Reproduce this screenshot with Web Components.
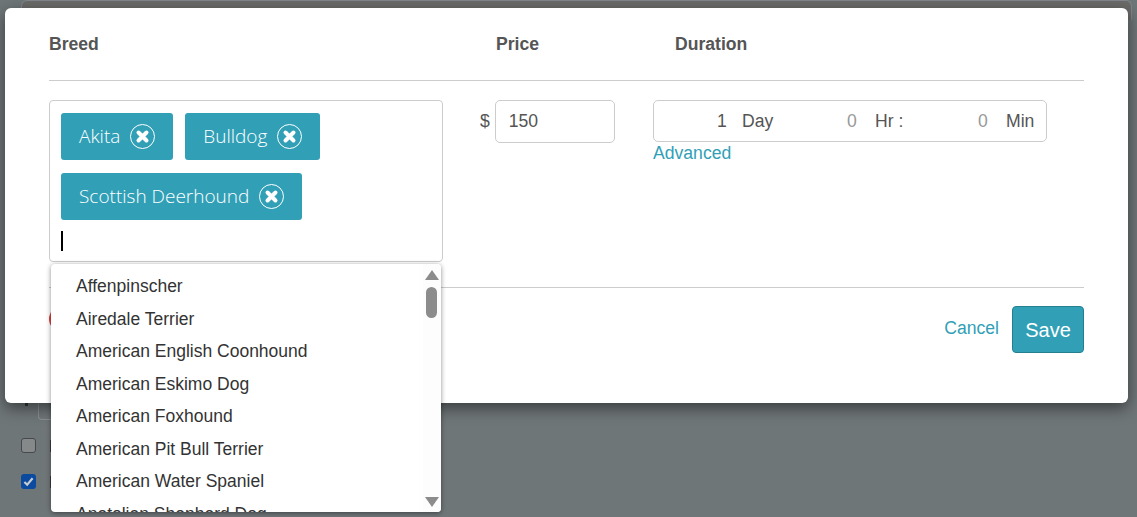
<!DOCTYPE html>
<html>
<head>
<meta charset="utf-8">
<title>Breed pricing</title>
<style>
  html, body { margin: 0; padding: 0; background: #6f7678; }
  body { font-family: "Liberation Sans", Arial, sans-serif; }
</style>
</head>
<body>
<page-backdrop></page-backdrop>
<edit-modal>
  <field-grid>
    <span slot="breed">Breed</span>
    <span slot="price">Price</span>
    <span slot="duration">Duration</span>
  </field-grid>
  <breed-picker slot="picker">
    <breed-tag>Akita</breed-tag>
    <breed-tag>Bulldog</breed-tag>
    <breed-tag>Scottish Deerhound</breed-tag>
  </breed-picker>
  <price-field slot="price" value="150"></price-field>
  <duration-field slot="duration"></duration-field>
</edit-modal>

<script>
class PageBackdrop extends HTMLElement {
  connectedCallback() {
    this.attachShadow({ mode: 'open' });
    this.shadowRoot.innerHTML = `
      <style>
        :host { display: block; height: 517px; overflow: hidden; box-sizing: border-box; }
        .card { height: 20px; margin: 0 5px 0 21px; box-sizing: border-box; border: 1px solid #80868a; border-bottom: 0; border-radius: 6px 6px 0 0; background: #6b6b6a; }
        .mark { width: 3px; height: 3px; margin: 383px 0 0 25px; background: #33383a; }
        .small { margin: -3px 0 0 38px; width: 60px; height: 17px; border: 1px solid #8b8f90; border-top: 0; border-radius: 0 0 4px 4px; box-sizing: border-box; }
        .row { display: flex; align-items: center; gap: 14px; margin-left: 21px; height: 15px; }
        .row.first { margin-top: 18px; }
        .row.second { margin-top: 21px; }
        .box { width: 15px; height: 15px; box-sizing: border-box; border: 1.5px solid #45494b; border-radius: 3px; background: #85898a; }
        .box.on { background: #0b4a9e; border: 0; display: flex; align-items: center; justify-content: center; }
        .stub { width: 2px; height: 12px; background: #3d3a34; }
      </style>
      <div class="card"></div>
      <div class="mark"></div>
      <div class="small"></div>
      <div class="row first"><span class="box"></span><span class="stub"></span></div>
      <div class="row second">
        <span class="box on"><svg width="13" height="13" viewBox="0 0 12 12"><path d="M2.2 6.4 4.8 9 9.8 3" fill="none" stroke="#c9cdd2" stroke-width="2"/></svg></span>
        <span class="stub"></span>
      </div>
    `;
  }
}
customElements.define('page-backdrop', PageBackdrop);

class EditModal extends HTMLElement {
  connectedCallback() {
    this.attachShadow({ mode: 'open' });
    this.shadowRoot.innerHTML = `
      <style>
        :host { display: block; position: absolute; top: 8px; left: 5px; width: 1123px; height: 395px; box-sizing: border-box; padding: 0 44px; background: #fff; border-radius: 6px; box-shadow: 0 5px 15px rgba(0,0,0,.5); color: #555; }
        hr { border: 0; border-top: 1px solid #ccc; margin: 0; }
        .head { height: 72px; }
        .body { display: grid; grid-template-columns: 394px 135px 394px; column-gap: 37px; margin-top: 19px; height: 187px; align-items: start; }
        .foot { display: flex; align-items: flex-start; margin-top: 18px; }
        .alert { width: 24px; height: 24px; margin-top: 1px; border-radius: 50%; background: #d9403a; margin-right: auto; }
        a { color: #31a0b7; font-size: 17.6px; text-decoration: none; margin: 12px 13px 0 0; }
        button { width: 72px; height: 47px; border: 1px solid #24808f; border-radius: 4px; background: #31a0b7; color: #fff; font: 20px "Liberation Sans", Arial, sans-serif; padding: 2px 0 0; }
      </style>
      <div class="head"><slot></slot></div>
      <hr>
      <div class="body">
        <slot name="picker"></slot>
        <slot name="price"></slot>
        <slot name="duration"></slot>
      </div>
      <hr>
      <div class="foot">
        <span class="alert"></span>
        <a href="#">Cancel</a>
        <button>Save</button>
      </div>
    `;
  }
}
customElements.define('edit-modal', EditModal);

class FieldGrid extends HTMLElement {
  connectedCallback() {
    this.attachShadow({ mode: 'open' });
    this.shadowRoot.innerHTML = `
      <style>
        :host { display: flex; height: 72px; align-items: center; font-weight: bold; font-size: 17.6px; color: #555; }
        .a { width: 447px; }
        .b { width: 179px; }
      </style>
      <div class="a"><slot name="breed"></slot></div>
      <div class="b"><slot name="price"></slot></div>
      <div><slot name="duration"></slot></div>
    `;
  }
}
customElements.define('field-grid', FieldGrid);

class BreedTag extends HTMLElement {
  connectedCallback() {
    this.attachShadow({ mode: 'open' });
    this.shadowRoot.innerHTML = `
      <style>
        :host { display: inline-flex; align-items: center; gap: 10px; height: 47px; padding: 0 18px; box-sizing: border-box; background: #31a0b7; border-radius: 3px; color: #fff; font: 300 19px "Open Sans", sans-serif; white-space: nowrap; }
        .label { margin-bottom: 2px; }
        svg { display: block; }
      </style>
      <span class="label"><slot></slot></span>
      <svg width="25" height="25" viewBox="0 0 25 25">
        <circle cx="12.5" cy="12.5" r="12" fill="none" stroke="#fff" stroke-width="1"/>
        <path d="M8.5 8.5 16.5 16.5M16.5 8.5 8.5 16.5" stroke="#fff" stroke-width="4" stroke-linecap="round"/>
      </svg>
    `;
  }
}
customElements.define('breed-tag', BreedTag);

class BreedPicker extends HTMLElement {
  connectedCallback() {
    this.attachShadow({ mode: 'open' });
    this.shadowRoot.innerHTML = `
      <style>
        :host { display: block; position: relative; height: 162px; box-sizing: border-box; border: 1px solid #ccc; border-radius: 4px; padding: 12px 11px; }
        .tags { display: flex; flex-wrap: wrap; gap: 13px 12px; }
        .caret { width: 2px; height: 20px; background: #000; margin-top: 11px; }
        breed-dropdown { position: absolute; left: 1px; top: 163px; }
      </style>
      <div class="tags"><slot></slot></div>
      <div class="caret"></div>
      <breed-dropdown></breed-dropdown>
    `;
  }
}
customElements.define('breed-picker', BreedPicker);

class BreedDropdown extends HTMLElement {
  connectedCallback() {
    const breeds = ['Affenpinscher', 'Airedale Terrier', 'American English Coonhound', 'American Eskimo Dog', 'American Foxhound', 'American Pit Bull Terrier', 'American Water Spaniel', 'Anatolian Shepherd Dog'];
    this.attachShadow({ mode: 'open' });
    this.shadowRoot.innerHTML = `
      <style>
        :host { display: flex; width: 390px; height: 248px; overflow: hidden; background: #fff; border-radius: 4px; box-shadow: 0 1px 5px rgba(0,0,0,.45); color: #333; font: 17.5px "Liberation Sans", Arial, sans-serif; }
        ul { flex: 1; list-style: none; margin: 0; padding: 6px 0 0 25px; }
        li { line-height: 32.5px; white-space: nowrap; }
        .bar { width: 18px; background: #fdfdfd; display: flex; flex-direction: column; align-items: center; padding: 6px 1px 0 0; box-sizing: border-box; }
        .thumb { width: 11px; height: 31px; border-radius: 6px; background: #8c8c8c; margin-top: 7px; margin-bottom: auto; }
        .down { margin-bottom: 5px; }
        svg { display: block; }
      </style>
      <ul>${breeds.map(b => `<li>${b}</li>`).join('')}</ul>
      <div class="bar">
        <svg width="14" height="10" viewBox="0 0 14 10"><path d="M7 0 14 10H0Z" fill="#8c8c8c"/></svg>
        <div class="thumb"></div>
        <svg class="down" width="14" height="10" viewBox="0 0 14 10"><path d="M7 10 14 0H0Z" fill="#8c8c8c"/></svg>
      </div>
    `;
  }
}
customElements.define('breed-dropdown', BreedDropdown);

class PriceField extends HTMLElement {
  connectedCallback() {
    this.attachShadow({ mode: 'open' });
    this.shadowRoot.innerHTML = `
      <style>
        :host { display: flex; align-items: center; gap: 5px; font-size: 17.6px; color: #555; }
        .box { width: 120px; height: 43px; box-sizing: border-box; border: 1px solid #ccc; border-radius: 5px; padding-left: 13px; line-height: 41px; }
      </style>
      <span>$</span>
      <div class="box">${this.getAttribute('value')}</div>
    `;
  }
}
customElements.define('price-field', PriceField);

class DurationField extends HTMLElement {
  connectedCallback() {
    this.attachShadow({ mode: 'open' });
    this.shadowRoot.innerHTML = `
      <style>
        :host { display: block; width: 394px; margin-left: 1px; font-size: 17.6px; color: #555; }
        .box { height: 42px; box-sizing: border-box; border: 1px solid #ccc; border-radius: 5px; display: flex; align-items: center; padding-left: 63px; }
        .n { text-align: right; width: 9px; flex: none; }
        .z { color: #999; }
        .day { width: 50px; margin: 0 55px 0 16px; }
        .hr { width: 40px; margin: 0 63px 0 19px; }
        .min { margin-left: 19px; }
        a { color: #31a0b7; text-decoration: none; display: block; margin-top: 1px; line-height: 21px; }
      </style>
      <div class="box">
        <span class="n">1</span><span class="day">Day</span>
        <span class="n z">0</span><span class="hr">Hr :</span>
        <span class="n z">0</span><span class="min">Min</span>
      </div>
      <a href="#">Advanced</a>
    `;
  }
}
customElements.define('duration-field', DurationField);
</script>
</body>
</html>
